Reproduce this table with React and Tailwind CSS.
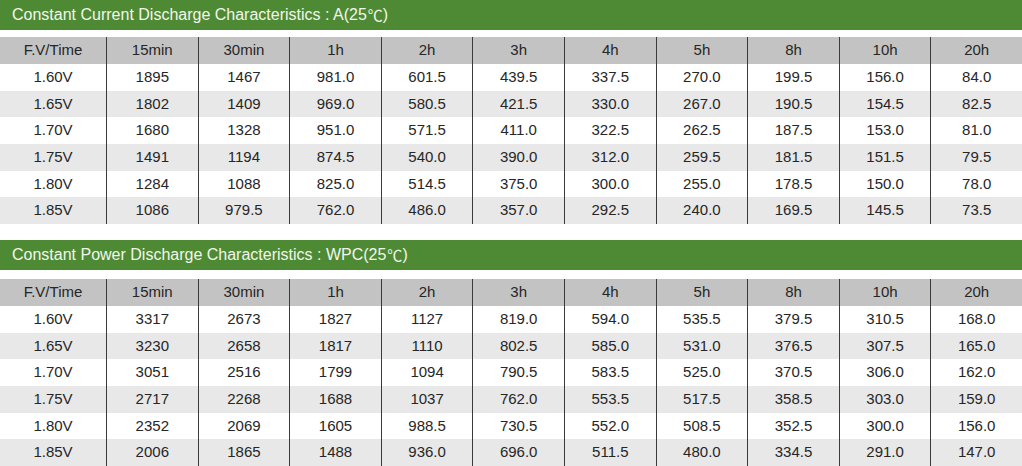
import React from 'react';

const cols = ["F.V/Time", "15min", "30min", "1h", "2h", "3h", "4h", "5h", "8h", "10h", "20h"];

const tables = [
  {
    title: "Constant Current Discharge Characteristics : A(25",
    rows: [
      ["1.60V", "1895", "1467", "981.0", "601.5", "439.5", "337.5", "270.0", "199.5", "156.0", "84.0"],
      ["1.65V", "1802", "1409", "969.0", "580.5", "421.5", "330.0", "267.0", "190.5", "154.5", "82.5"],
      ["1.70V", "1680", "1328", "951.0", "571.5", "411.0", "322.5", "262.5", "187.5", "153.0", "81.0"],
      ["1.75V", "1491", "1194", "874.5", "540.0", "390.0", "312.0", "259.5", "181.5", "151.5", "79.5"],
      ["1.80V", "1284", "1088", "825.0", "514.5", "375.0", "300.0", "255.0", "178.5", "150.0", "78.0"],
      ["1.85V", "1086", "979.5", "762.0", "486.0", "357.0", "292.5", "240.0", "169.5", "145.5", "73.5"],
    ],
  },
  {
    title: "Constant Power Discharge Characteristics : WPC(25",
    rows: [
      ["1.60V", "3317", "2673", "1827", "1127", "819.0", "594.0", "535.5", "379.5", "310.5", "168.0"],
      ["1.65V", "3230", "2658", "1817", "1110", "802.5", "585.0", "531.0", "376.5", "307.5", "165.0"],
      ["1.70V", "3051", "2516", "1799", "1094", "790.5", "583.5", "525.0", "370.5", "306.0", "162.0"],
      ["1.75V", "2717", "2268", "1688", "1037", "762.0", "553.5", "517.5", "358.5", "303.0", "159.0"],
      ["1.80V", "2352", "2069", "1605", "988.5", "730.5", "552.0", "508.5", "352.5", "300.0", "156.0"],
      ["1.85V", "2006", "1865", "1488", "936.0", "696.0", "511.5", "480.0", "334.5", "291.0", "147.0"],
    ],
  },
];

function Row({ cells, className }) {
  return (
    <div className={`grid grid-cols-[106px_repeat(10,1fr)] ${className}`}>
      {cells.map((c, i) => (
        <div
          key={i}
          className={`flex items-center justify-center ${i > 0 ? "border-l border-[#3a3a3a]" : ""}`}
        >
          {c}
        </div>
      ))}
    </div>
  );
}

export default function App() {
  return (
    <div className="w-[1022px] bg-white font-['Liberation_Sans',Arial,sans-serif] text-[15px] text-[#262626]">
      {tables.map((t, ti) => (
        <div key={ti} className={ti > 0 ? "mt-[16px]" : ""}>
          <div className="h-[30px] bg-[#4e8a33] flex items-center pl-[12px] text-[16px] text-[#f1f6ec]">
            {t.title}
            <span className="font-['Noto_Sans_CJK_SC',sans-serif] text-[15px] ml-[1px]">℃</span>)
          </div>
          <div className={ti > 0 ? "mt-[9px]" : "mt-[7px]"}>
            <Row cells={cols} className="h-[27px] bg-[#c3c3c3]" />
            {t.rows.map((r, ri) => (
              <Row
                key={ri}
                cells={r}
                className={`h-[26.67px] ${ri % 2 === 1 ? "bg-[#e8e8e8]" : "bg-white"}`}
              />
            ))}
          </div>
        </div>
      ))}
    </div>
  );
}
